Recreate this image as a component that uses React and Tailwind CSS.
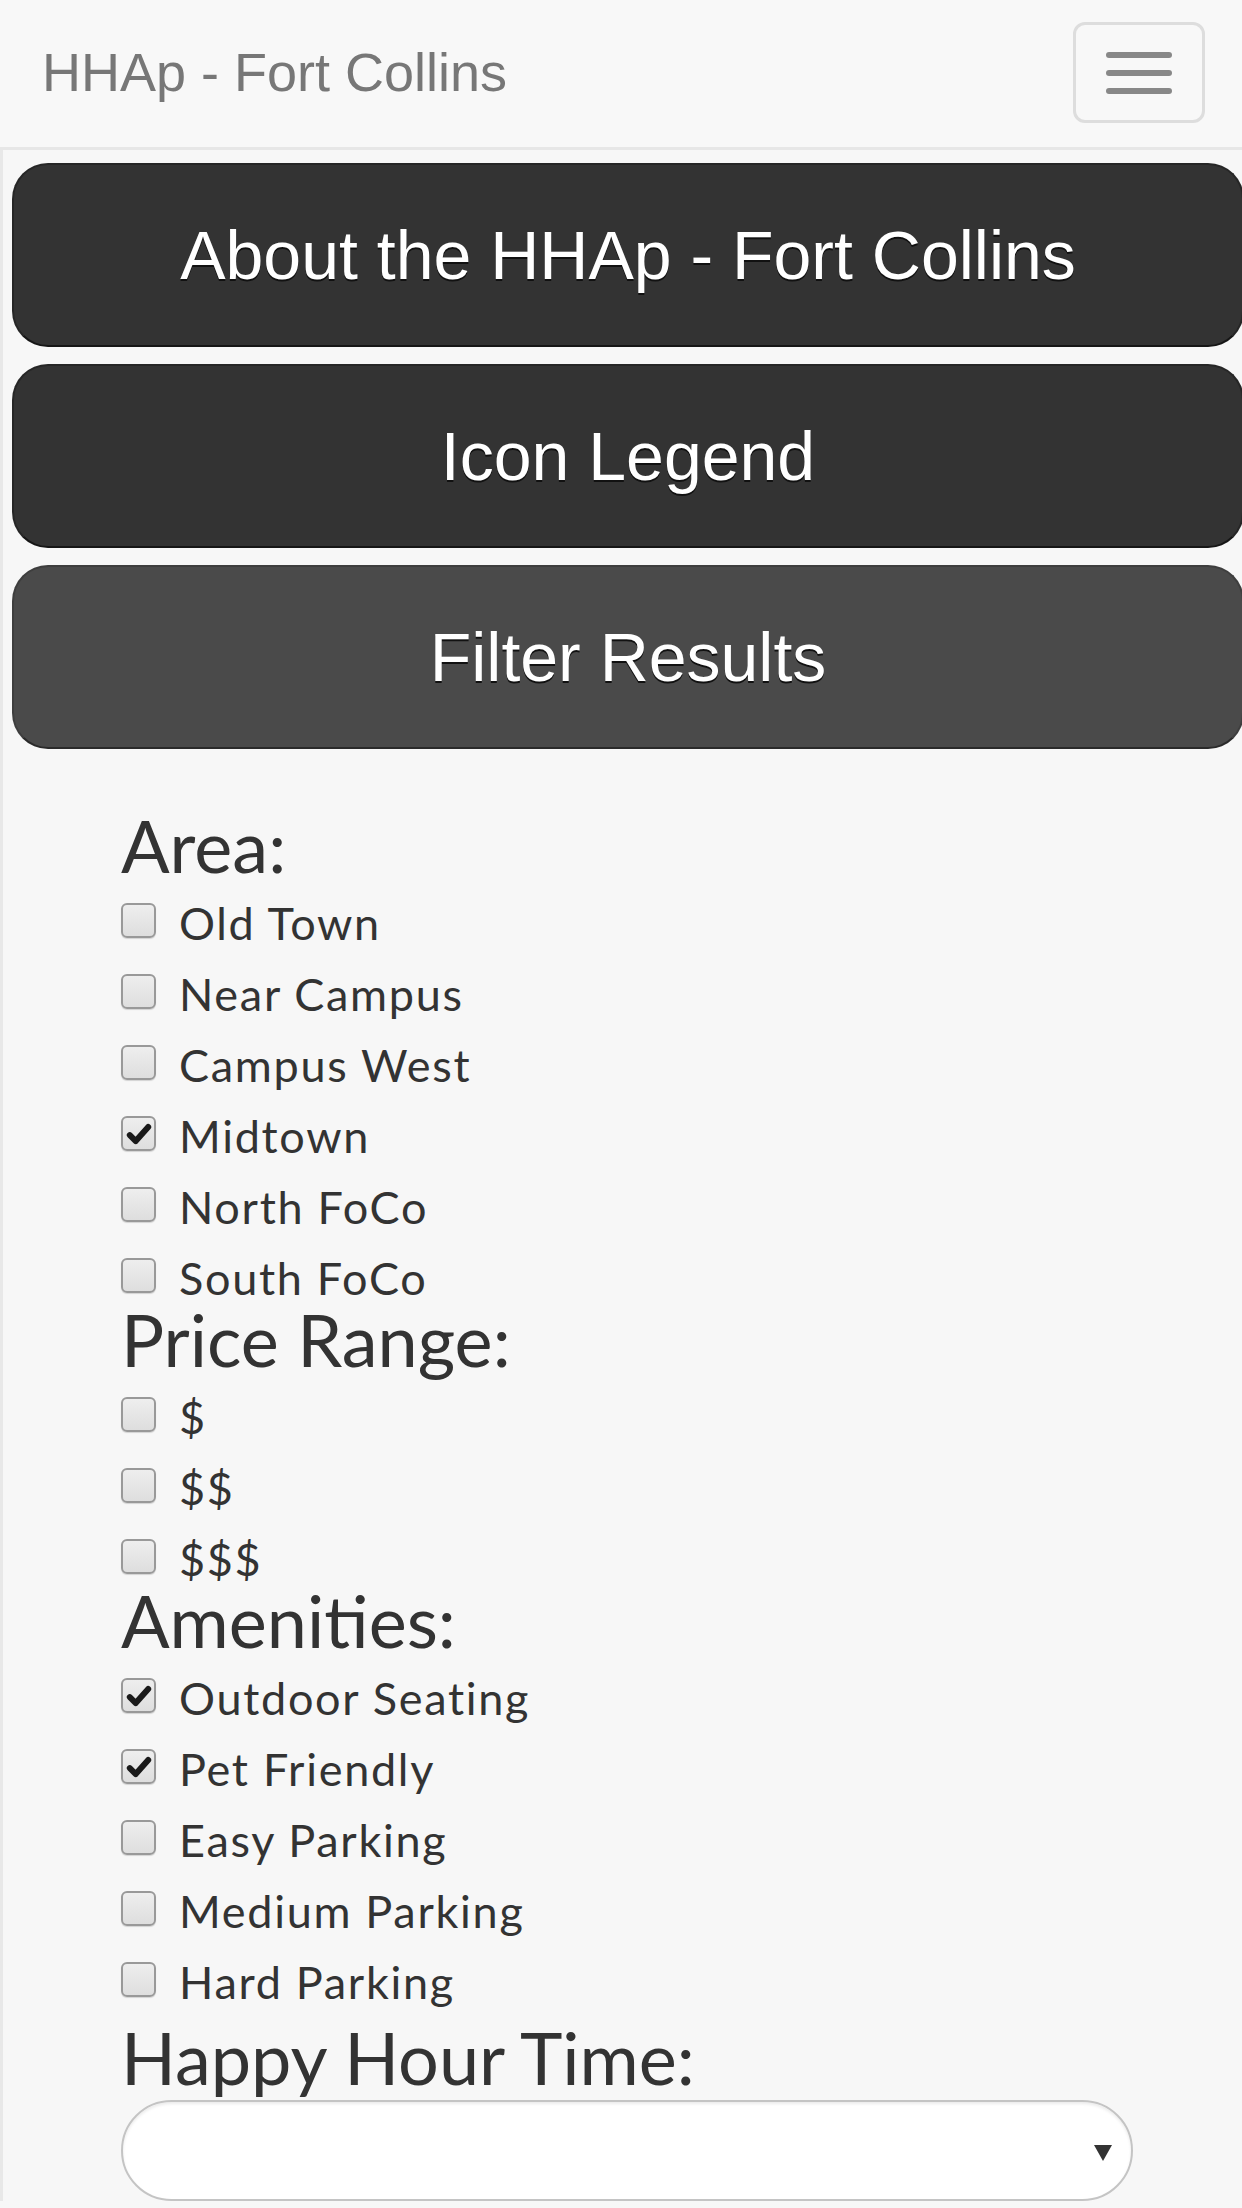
import { useState } from "react";

const areas = [
  { label: "Old Town", checked: false },
  { label: "Near Campus", checked: false },
  { label: "Campus West", checked: false },
  { label: "Midtown", checked: true },
  { label: "North FoCo", checked: false },
  { label: "South FoCo", checked: false },
];

const prices = [
  { label: "$", checked: false },
  { label: "$$", checked: false },
  { label: "$$$", checked: false },
];

const amenities = [
  { label: "Outdoor Seating", checked: true },
  { label: "Pet Friendly", checked: true },
  { label: "Easy Parking", checked: false },
  { label: "Medium Parking", checked: false },
  { label: "Hard Parking", checked: false },
];

const CheckRow = ({ label, checked, onToggle }) => (
  <div
    className="relative flex h-[71px] cursor-pointer items-start"
    onClick={onToggle}
  >
    <div className="mt-[15px] flex h-[35px] w-[35px] items-center justify-center rounded-[6px] border-2 border-[#999] bg-gradient-to-b from-[#eeeeee] to-[#dedede] shadow-[0_1px_1px_rgba(0,0,0,0.15)]">
      {checked && (
        <svg viewBox="0 0 24 24" className="h-[26px] w-[26px]">
          <path d="M3.5 13 L9 18.5 L20.5 5.5" fill="none" stroke="#1a1a1a" strokeWidth="5.5" strokeLinecap="round" strokeLinejoin="round" />
        </svg>
      )}
    </div>
    <span className="ml-[23px] text-[45px] leading-[71px] tracking-[1.7px] text-[#333]">{label}</span>
  </div>
);

const Section = ({ title, items, onToggle }) => (
  <div>
    <h2 className="h-[68px] text-[72px] leading-[50px] text-[#333]">{title}</h2>
    {items.map((item, i) => (
      <CheckRow key={item.label} {...item} onToggle={() => onToggle(i)} />
    ))}
  </div>
);

export default function App() {
  const [area, setArea] = useState(areas);
  const [price, setPrice] = useState(prices);
  const [amen, setAmen] = useState(amenities);

  const toggle = (list, setList) => (i) =>
    setList(list.map((it, j) => (j === i ? { ...it, checked: !it.checked } : it)));

  return (
    <div className="min-h-[2208px] w-full overflow-hidden bg-[#f7f7f7]" style={{ fontFamily: "Lato, 'Liberation Sans', sans-serif" }}>
      {/* Navbar */}
      <div className="flex h-[150px] items-start justify-between border-b-[3px] border-[#e7e7e7] bg-[#f8f8f8]">
        <div className="pl-[42px] pt-[45px] text-[54px] leading-[54px] text-[#777]" style={{ fontFamily: "'Liberation Sans', Arial, sans-serif" }}>
          HHAp - Fort Collins
        </div>
        <button
          type="button"
          className="mr-[37px] mt-[22px] flex h-[101px] w-[132px] flex-col items-center justify-center gap-[12px] rounded-[12px] border-[3px] border-[#ddd]"
        >
          <span className="block h-[6px] w-[66px] rounded-[3px] bg-[#888]" />
          <span className="block h-[6px] w-[66px] rounded-[3px] bg-[#888]" />
          <span className="block h-[6px] w-[66px] rounded-[3px] bg-[#888]" />
        </button>
      </div>

      {/* Content */}
      <div className="border-l-[3px] border-[#e8e8e8] pt-[13px]">
        <div className="flex flex-col gap-[17px] pl-[9px]" style={{ fontFamily: "'Liberation Sans', Arial, sans-serif" }}>
          <button type="button" className="flex h-[184px] w-[1232px] shrink-0 items-center justify-center rounded-[36px] border-2 border-[#262626] border-b-[#161616] bg-[#333] text-[68px] text-white [text-shadow:0_2px_0_#111]">
            About the HHAp - Fort Collins
          </button>
          <button type="button" className="flex h-[184px] w-[1232px] shrink-0 items-center justify-center rounded-[36px] border-2 border-[#262626] border-b-[#161616] bg-[#333] text-[68px] text-white [text-shadow:0_2px_0_#111]">
            Icon Legend
          </button>
          <button type="button" className="flex h-[184px] w-[1232px] shrink-0 items-center justify-center rounded-[36px] border-2 border-[#3e3e3e] border-b-[#2a2a2a] bg-[#4a4a4a] text-[68px] text-white [text-shadow:0_2px_0_#111]">
            Filter Results
          </button>
        </div>

        <div className="pl-[118px] pt-[71px]">
          <Section title="Area:" items={area} onToggle={toggle(area, setArea)} />
          <Section title="Price Range:" items={price} onToggle={toggle(price, setPrice)} />
          <Section title="Amenities:" items={amen} onToggle={toggle(amen, setAmen)} />

          <h2 className="mt-[14px] h-[68px] text-[72px] leading-[50px] text-[#333]">Happy Hour Time:</h2>
          <div className="relative h-[101px] w-[1012px] rounded-full border-2 border-[#c4c4c4] bg-white shadow-[inset_0_2px_3px_rgba(0,0,0,0.08)]">
            <span className="absolute right-[19px] top-[43px] h-0 w-0 border-x-[9px] border-t-[16px] border-x-transparent border-t-[#333]" />
          </div>
        </div>
      </div>
    </div>
  );
}
